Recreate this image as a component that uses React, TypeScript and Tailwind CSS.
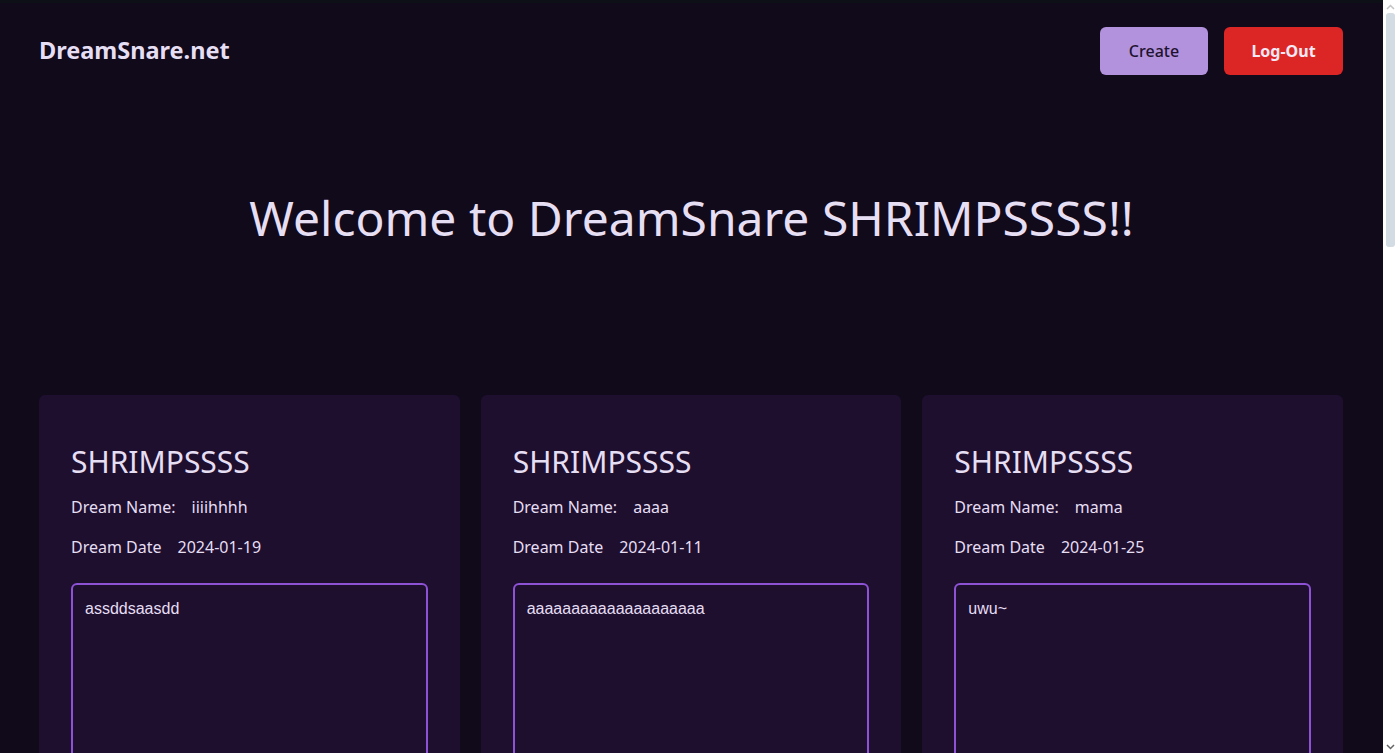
import React from "react";

const dreams = [
  { name: "iiiihhhh", date: "2024-01-19", text: "assddsaasdd" },
  { name: "aaaa", date: "2024-01-11", text: "aaaaaaaaaaaaaaaaaaaa" },
  { name: "mama", date: "2024-01-25", text: "uwu~" },
];

function FakeScrollbar() {
  return (
    <div className="relative h-screen w-[15px] shrink-0 bg-white">
      <svg className="absolute left-[3px] top-[4px]" width="9" height="6" viewBox="0 0 9 6">
        <path d="M1 5 L4.5 1.5 L8 5" stroke="#c4c4c4" strokeWidth="1.5" fill="none" />
      </svg>
      <div className="absolute left-[3px] top-[13px] h-[234px] w-[9px] rounded-[3px] bg-[#d3dbe3]" />
      <svg className="absolute bottom-[3px] left-[3px]" width="9" height="6" viewBox="0 0 9 6">
        <path d="M1 1 L4.5 4.5 L8 1" stroke="#666" strokeWidth="1.5" fill="none" />
      </svg>
    </div>
  );
}

export default function App() {
  return (
    <div className="flex h-screen overflow-hidden bg-[#100a1b]">
      <div
        className="min-w-0 flex-1 text-[#e6def3]"
        style={{ fontFamily: '"Noto Sans", sans-serif' }}
      >
        <div className="h-[3px] bg-[#0d1117]" />
        <header className="flex items-center justify-between pl-[39px] pr-10 pt-6">
          <div className="text-[23.5px] font-bold">DreamSnare.net</div>
          <div className="flex gap-4">
            <button className="h-12 w-[108px] rounded-md bg-[#b392dd] text-[16px] font-medium text-[#1e1230]">
              Create
            </button>
            <button className="h-12 w-[119px] rounded-md bg-[#dc2626] text-[16px] font-bold text-[#f3e8f5]">
              Log-Out
            </button>
          </div>
        </header>
        <h1 className="mt-[113px] text-center text-[48px] leading-[60px]">
          Welcome to DreamSnare SHRIMPSSSS!!
        </h1>
        <main className="mt-[147px] grid grid-cols-3 gap-[21px] pl-[39px] pr-10 pb-10">
          {dreams.map((d, i) => (
            <div key={i} className="rounded-md bg-[#1e0f2f] px-8 pt-[47px] pb-8">
              <h2 className="text-[30px] leading-[40px]">SHRIMPSSSS</h2>
              <div className="mt-[13px] flex gap-4 text-[16px] leading-[24px]">
                <span>Dream Name:</span>
                <span>{d.name}</span>
              </div>
              <div className="mt-4 flex gap-4 text-[16px] leading-[24px]">
                <span>Dream Date</span>
                <span>{d.date}</span>
              </div>
              <textarea
                readOnly
                defaultValue={d.text}
                className="mt-[24px] block h-[260px] w-full resize-none rounded-md border-2 border-[#8d52d6] bg-transparent px-3 py-[12px] text-[16px] text-[#e6def3] outline-none"
                style={{ fontFamily: '"Liberation Sans", Arial, sans-serif' }}
              />
            </div>
          ))}
        </main>
      </div>
      <FakeScrollbar />
    </div>
  );
}
